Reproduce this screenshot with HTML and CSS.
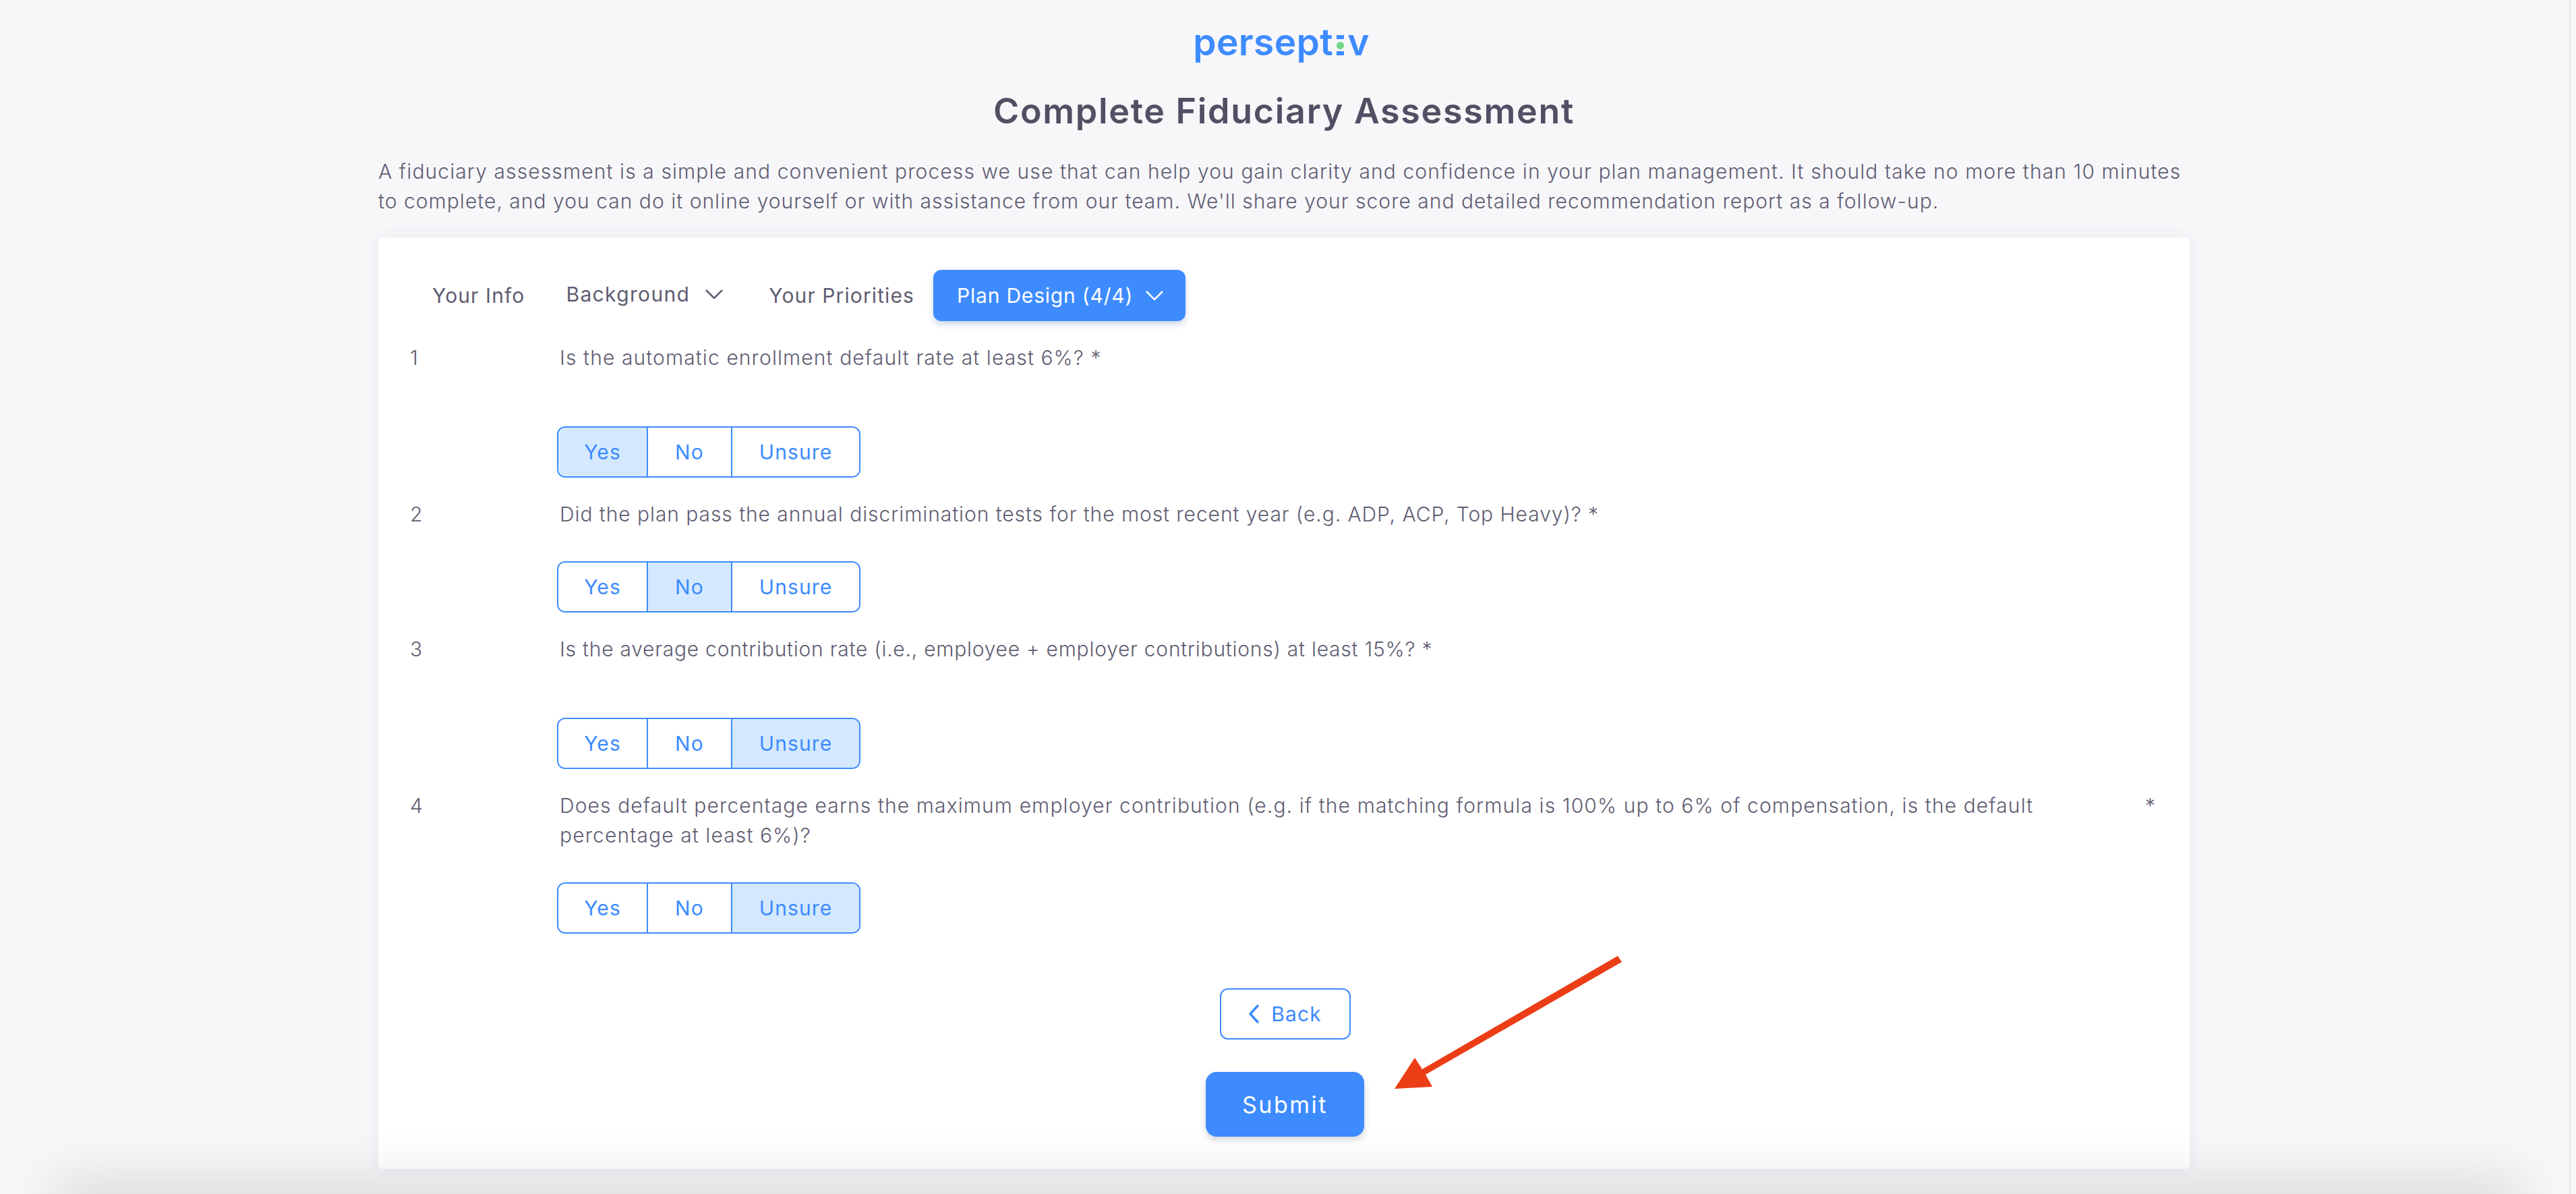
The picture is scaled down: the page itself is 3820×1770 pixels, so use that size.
FILE: index.html
```html
<!DOCTYPE html>
<html>
<head>
	<title>Complete Fiduciary Assessment</title>
	<link rel="stylesheet" href="styles.css">
</head>
<body>

<div class="page">
	<div class="logo">persept<span class="logo-i"><span class="logo-sq"></span><span class="logo-dot"></span><span class="logo-sq"></span></span>v</div>
	<h1>Complete Fiduciary Assessment</h1>
	<p class="intro">A fiduciary assessment is a simple and convenient process we use that can help you gain clarity and confidence in your plan management. It should take no more than 10 minutes<br><span class="intro-second">to complete, and you can do it online yourself or with assistance from our team. We'll share your score and detailed recommendation report as a follow-up.</span></p>

	<div class="card">
		<div class="tabs">
			<div class="tab">Your Info</div>
			<div class="tab tab-drop">Background
				<svg class="chev" viewBox="0 0 26 14"><path d="M1 1l12 12L25 1"/></svg>
			</div>
			<div class="tab">Your Priorities</div>
			<div class="tab tab-active">Plan Design (4/4)
				<svg class="chev" viewBox="0 0 26 14"><path d="M1 1l12 12L25 1"/></svg>
			</div>
		</div>

		<div class="question">
			<div class="q-head">
				<div class="q-num">1</div>
				<div class="q-text">Is the automatic enrollment default rate at least 6%? *</div>
			</div>
			<div class="answers answers-far">
				<button class="opt opt-yes on">Yes</button><button class="opt opt-no">No</button><button class="opt opt-unsure">Unsure</button>
			</div>
		</div>

		<div class="question">
			<div class="q-head">
				<div class="q-num">2</div>
				<div class="q-text q-text-2">Did the plan pass the annual discrimination tests for the most recent year (e.g. ADP, ACP, Top Heavy)? *</div>
			</div>
			<div class="answers">
				<button class="opt opt-yes">Yes</button><button class="opt opt-no on">No</button><button class="opt opt-unsure">Unsure</button>
			</div>
		</div>

		<div class="question">
			<div class="q-head">
				<div class="q-num">3</div>
				<div class="q-text q-text-3">Is the average contribution rate (i.e., employee + employer contributions) at least 15%? *</div>
			</div>
			<div class="answers answers-far">
				<button class="opt opt-yes">Yes</button><button class="opt opt-no">No</button><button class="opt opt-unsure on">Unsure</button>
			</div>
		</div>

		<div class="question">
			<div class="q-head">
				<div class="q-num">4</div>
				<div class="q-text q-text-long">
					<span>Does default percentage earns the maximum employer contribution (e.g. if the matching formula is 100% up to 6% of compensation, is the default<br>percentage at least 6%)?</span>
					<span class="q-star">*</span>
				</div>
			</div>
			<div class="answers">
				<button class="opt opt-yes">Yes</button><button class="opt opt-no">No</button><button class="opt opt-unsure on">Unsure</button>
			</div>
		</div>

		<div class="actions">
			<button class="btn-back">
				<svg class="back-chev" viewBox="0 0 16 28"><path d="M14 2L3 14l11 12"/></svg>
				Back
			</button>
			<button class="btn-submit">Submit</button>
		</div>
	</div>
</div>

<!-- annotation arrow on top of the screenshot -->
<svg class="arrow" viewBox="0 0 3820 1770">
	<polygon fill="#ec3e16" points="2399,1417 2405,1426 2114,1593 2124,1611 2068,1614 2098,1568 2109,1585"/>
</svg>
<div class="bottom-shade"></div>
<div class="edge-line"></div>

</body>
</html>
```

FILE: styles.css
```css
html, body {
	margin: 0;
	height: 1770px;
	overflow: hidden;
}

body {
	position: relative;
	background-color: #f7f7fa;
	font-family: "Inter", "Open Sans", sans-serif;
	letter-spacing: 1.1px;
	color: #5f5d72;
}

.page {
	display: flex;
	flex-direction: column;
	align-items: center;
	padding-right: 12px;
}

/* logo */
.logo {
	display: flex;
	align-items: baseline;
	height: 64px;
	margin: 30px 0 0 -8px;
	font-size: 55px;
	line-height: 64px;
	font-weight: 600;
	letter-spacing: 0.4px;
	color: #3d8bff;
}

.logo-i {
	display: flex;
	flex-direction: column;
	align-items: center;
	justify-content: space-between;
	align-self: flex-end;
	width: 11px;
	height: 30px;
	margin: 0 5px 12px 5px;
}

.logo-sq {
	width: 11px;
	height: 6px;
	background-color: #3d8bff;
}

.logo-dot {
	width: 11px;
	height: 11px;
	border-radius: 50%;
	background-color: #6fd68a;
}

h1 {
	margin: 38px 0 0;
	font-size: 52px;
	line-height: 66px;
	font-weight: 600;
	letter-spacing: 1.7px;
	color: #514f63;
}

.intro {
	width: 2686px;
	margin: 34px 0 0;
	font-size: 30px;
	line-height: 44px;
	font-weight: 300;
	white-space: nowrap;
}

.intro-second {
	letter-spacing: 1.02px;
}

/* card */
.card {
	width: 2686px;
	height: 1381px;
	box-sizing: border-box;
	margin-top: 32px;
	padding: 48px 44px 48px 47px;
	background-color: #fff;
	border-radius: 6px;
	box-shadow: 0 0 24px rgba(60, 60, 90, 0.07);
}

.tabs {
	display: flex;
	align-items: center;
	height: 76px;
}

.tab {
	display: flex;
	align-items: center;
	height: 76px;
	padding: 0 33px;
	box-sizing: border-box;
	font-size: 30px;
	font-weight: 400;
	white-space: nowrap;
}

.tab-drop {
	padding: 0 35px 4px 28px;
	letter-spacing: 1.35px;
}

.tab-drop .chev {
	margin-left: 23px;
}

.tab-active {
	margin-left: -5px;
	padding: 0 33px 0 35px;
	letter-spacing: 0.8px;
	background-color: #3d8bff;
	color: #fff;
	border-radius: 12px;
	box-shadow: 0 5px 10px rgba(60, 100, 180, 0.25);
}

.chev {
	width: 26px;
	height: 14px;
	margin-left: 19px;
	fill: none;
	stroke: currentColor;
	stroke-width: 2.5;
}

.question {
	margin-top: 32px;
}

.q-head {
	display: flex;
}

.q-num {
	width: 222px;
	flex-shrink: 0;
	font-size: 30px;
	line-height: 44px;
	font-weight: 300;
}

.q-text {
	font-size: 30px;
	line-height: 44px;
	font-weight: 300;
	flex: 1;
}

.q-text-2 {
	letter-spacing: 0.93px;
}

.q-text-3 {
	letter-spacing: 0.75px;
}

.q-text-long {
	display: flex;
	justify-content: space-between;
}

.q-star {
	margin-right: 6px;
}

.answers {
	display: flex;
	width: 450px;
	height: 76px;
	margin: 48px 0 0 218px;
	box-sizing: border-box;
	border: 2.5px solid #3d8bff;
	border-radius: 12px;
	overflow: hidden;
}

.answers-far {
	margin-top: 80px;
}

.opt {
	padding: 0;
	border: 0;
	background: #fff;
	color: #3d8bff;
	font-family: inherit;
	letter-spacing: inherit;
	font-size: 30px;
	font-weight: 400;
	border-right: 2px solid #3d8bff;
}

.opt.on {
	background-color: #d4e9ff;
}

.opt-yes {
	width: 133px;
}

.opt-no {
	width: 125px;
}

.opt-unsure {
	flex: 1;
	border-right: 0;
}

/* back + submit */
.actions {
	display: flex;
	flex-direction: column;
	align-items: center;
	margin-top: 81px;
}

.btn-back {
	display: flex;
	align-items: center;
	justify-content: center;
	gap: 18px;
	width: 194px;
	height: 76px;
	box-sizing: border-box;
	background: #fff;
	border: 2px solid #3d8bff;
	border-radius: 12px;
	color: #3d8bff;
	font-family: inherit;
	letter-spacing: inherit;
	font-size: 30px;
}

.back-chev {
	width: 16px;
	height: 28px;
	fill: none;
	stroke: currentColor;
	stroke-width: 3.5;
	stroke-linecap: round;
	stroke-linejoin: round;
}

.btn-submit {
	width: 235px;
	height: 96px;
	margin-top: 48px;
	border: 0;
	border-radius: 16px;
	background-color: #3d8bff;
	color: #fff;
	font-family: inherit;
	letter-spacing: 2.5px;
	font-size: 34px;
	box-shadow: 0 5px 10px rgba(60, 60, 90, 0.2);
}

/* overlays */
.arrow {
	position: absolute;
	left: 0;
	top: 0;
	width: 3820px;
	height: 1770px;
	pointer-events: none;
}

.bottom-shade {
	position: absolute;
	left: 100px;
	right: 100px;
	bottom: -40px;
	height: 40px;
	box-shadow: 0 0 80px 20px rgba(0, 0, 0, 0.12);
	pointer-events: none;
}

.edge-line {
	position: absolute;
	top: 0;
	right: 8px;
	width: 2px;
	height: 100%;
	background-color: #e6e6e9;
}
```
